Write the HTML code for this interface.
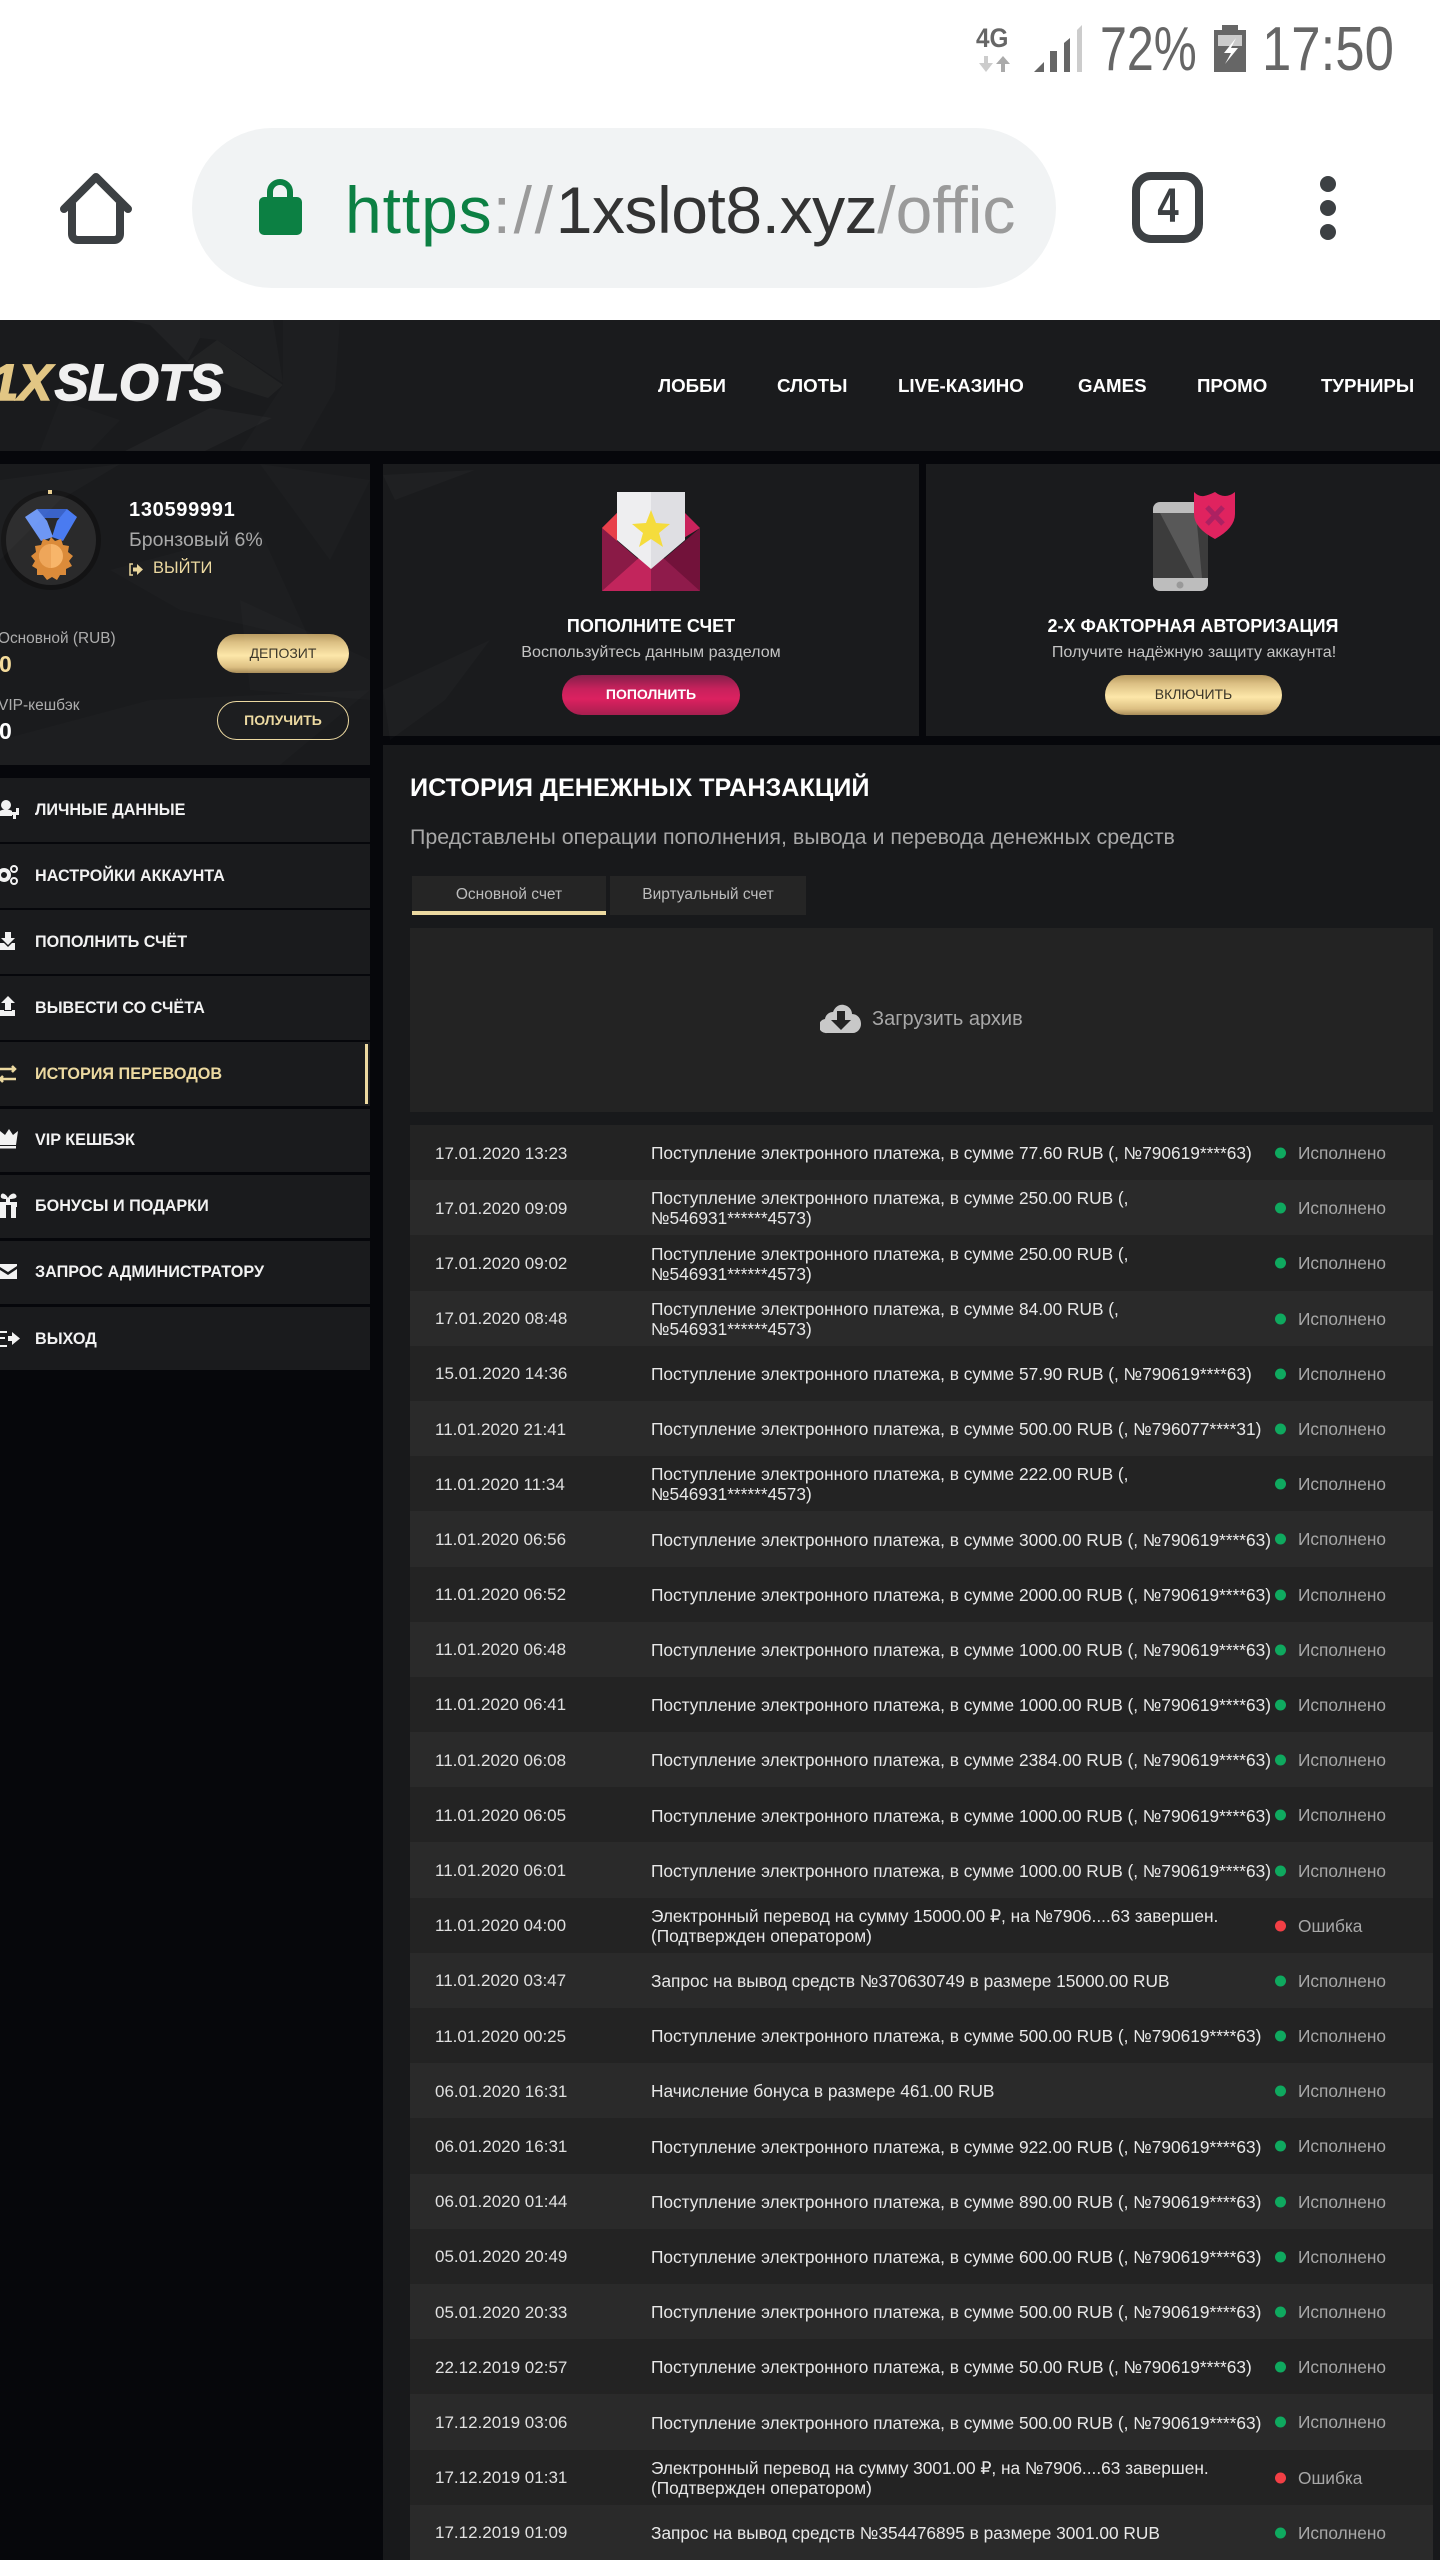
<!DOCTYPE html>
<html lang="ru"><head><meta charset="utf-8"><title>1xSlots</title>
<style>
*{box-sizing:border-box;margin:0;padding:0}
html,body{width:1440px;height:2560px;overflow:hidden;background:#06070b}
body{position:relative;font-family:"Liberation Sans","Noto Sans CJK SC",sans-serif;color:#fff}
.a{position:absolute;white-space:nowrap}
.p{position:absolute;background:#1a1b1d}
.sx{transform-origin:0 50%}
.c{position:absolute;white-space:nowrap;text-align:center;transform:translateX(-50%)}
.nav{position:absolute;top:374.800px;font-size:18.700px;line-height:22px;font-weight:700;white-space:nowrap;transform-origin:0 50%}
.m{position:absolute;left:0;width:370px;height:63.5px;background:#1a1b1d}
.m span{position:absolute;left:35px;top:21.800px;font-size:16.200px;line-height:20px;font-weight:700;color:#f2f2f2;white-space:nowrap}
.btn{position:absolute;border-radius:22px;text-align:center;white-space:nowrap}
.gold{background:linear-gradient(180deg,#b89a60 0,#dcc084 22%,#fde7a9 55%,#dcbf82 85%,#a88c58 100%);color:#3a3528}
#t{position:absolute;left:410px;top:1125px;width:1023px}
.r{position:relative;height:55.2px;background:#232323}
.r:nth-child(even){background:#2a2a2a}
.r b,.r i,.r u,.r s{position:absolute;top:50%;transform:translateY(-50%);font-weight:400;font-style:normal;text-decoration:none;white-space:nowrap}
.r b{left:25px;font-size:17px;line-height:20px;color:#e0e0e0;margin-top:1px}
.r i{left:241px;font-size:17.300px;line-height:20px;color:#e8e8e8;margin-top:.7px}
.r u{left:865px;width:11px;height:11px;border-radius:50%;background:#0fa95f;margin-top:.5px}
.r s{left:888px;font-size:17.300px;line-height:20px;color:#a8a8a8;margin-top:.5px}
.r.e u{background:#f23f45}
</style></head><body>
<div class="a" style="left:0;top:0;width:1440px;height:320px;background:#fff"></div>

<!-- status bar -->
<div class="a" style="left:976px;top:23px;font-size:27px;line-height:30px;font-weight:700;color:#666;transform:scaleX(.9);transform-origin:0 50%">4G</div>
<svg class="a" style="left:975px;top:20px" width="115" height="56" viewBox="975 20 115 56">
<path d="M988 56v7h5l-7 9-7-9h5v-7z" fill="#ccc"/><path d="M1001 72v-8h-5l7-8 7 8h-5v8z" fill="#aaa"/>
<path d="M1034 72l10-10v10z" fill="#666"/><rect x="1050" y="51" width="7" height="21" fill="#666"/><path d="M1064 43l6-5v34h-6z" fill="#666"/><path d="M1077 30l5-5v47h-5z" fill="#ccc"/>
</svg>
<div class="a sx" style="left:1100px;top:14px;font-size:62px;line-height:72px;color:#666;transform:scaleX(.78)">72%</div>
<svg class="a" style="left:1210px;top:22px" width="40" height="54" viewBox="1210 22 40 54">
<path d="M1222 25h16v5h8v42h-32V30h8z" fill="#666"/><rect x="1218" y="35" width="24" height="11" fill="#ccc"/>
<path d="M1236 38l-12 15h7l-6 11 13-16h-7z" fill="#fff"/></svg>
<div class="a sx" style="left:1262px;top:14px;font-size:62px;line-height:72px;color:#666;transform:scaleX(.85)">17:50</div>

<!-- browser bar -->
<svg class="a" style="left:50px;top:165px" width="90" height="85" viewBox="50 165 90 85">
<path d="M64 209L96 177L128 209" fill="none" stroke="#3c4043" stroke-width="8" stroke-linecap="round" stroke-linejoin="round"/>
<path d="M72 203V234a6 6 0 0 0 6 6H114a6 6 0 0 0 6-6V203" fill="none" stroke="#3c4043" stroke-width="8"/></svg>
<div class="a" style="left:192px;top:128px;width:864px;height:160px;border-radius:80px;background:#f1f3f4"></div>
<svg class="a" style="left:255px;top:175px" width="50" height="64" viewBox="255 175 50 64">
<path d="M270 199v-7a10 10 0 0 1 20 0v7" fill="none" stroke="#0c8043" stroke-width="6"/>
<rect x="259" y="197" width="43" height="38" rx="5" fill="#0c8043"/></svg>
<div class="a" style="left:345px;top:170px;width:670px;height:80px;overflow:hidden;font-size:66px;line-height:80px;color:#9a9a9a"><span style="color:#0c8043;letter-spacing:.9px">https</span><span style="letter-spacing:2.700px">://</span><span style="color:#333;letter-spacing:-.45px">1xslot8.xyz</span>/offic</div>
<div class="a" style="left:1132px;top:172px;width:71px;height:71px;border:8px solid #3c4043;border-radius:19px"></div>
<div class="c" style="left:1168px;top:179px;font-size:48px;line-height:56px;font-weight:700;color:#3c4043;transform:translateX(-50%) scaleX(.8)">4</div>
<svg class="a" style="left:1315px;top:170px" width="26" height="76" viewBox="1315 170 26 76"><g fill="#3c4043"><circle cx="1328" cy="184" r="8"/><circle cx="1328" cy="208" r="8"/><circle cx="1328" cy="232" r="8"/></g></svg>

<!-- header -->
<div class="p" style="left:0;top:320px;width:1440px;height:131px"></div>
<div class="a" style="left:-10px;top:353px;font-size:51px;line-height:60px;font-weight:700;font-style:italic;letter-spacing:-.4px"><span style="color:#e2c684;-webkit-text-stroke:1.500px #e2c684">1X</span><span style="color:#f0f0f0;-webkit-text-stroke:1.500px #f0f0f0;margin-left:3px">SLOTS</span></div>
<div class="nav" style="left:658px">ЛОББИ</div>
<div class="nav" style="left:777px">СЛОТЫ</div>
<div class="nav" style="left:898px">LIVE-КАЗИНО</div>
<div class="nav" style="left:1078px">GAMES</div>
<div class="nav" style="left:1197px">ПРОМО</div>
<div class="nav" style="left:1321px">ТУРНИРЫ</div>

<!-- profile panel -->
<div class="p" style="left:0;top:464px;width:370px;height:301px"></div>
<svg class="a" style="left:0;top:485px" width="105" height="110" viewBox="0 485 105 110">
<circle cx="51" cy="540" r="47.500" fill="#2a2a2b" stroke="#131314" stroke-width="5"/><rect x="48" y="490" width="4" height="4" fill="#e9cf90"/>
<path d="M37 509h30l-2 9H39z" fill="#3a63c9"/><path d="M25 517l12-8 10 12 6 16-12 4z" fill="#6e97f4"/><path d="M77 517l-10-8-10 12-5 16 11 4z" fill="#4a7bf0"/>
<path d="M51 537l4 4 6-2 2 6 6 1-1 6 5 4-4 5 3 5-6 3v6l-6 0-3 5-5-3-5 3-4-5-6 0 0-6-5-3 3-5-4-5 5-4-1-6 6-1 2-6 6 2z" fill="#db8b3a"/>
<circle cx="51" cy="556" r="12" fill="#f7b56a"/><path d="M51 544v24a12 12 0 0 1 0-24z" fill="#eea65a"/></svg>
<div class="a" style="left:129px;top:498px;font-size:20px;line-height:24px;font-weight:700;letter-spacing:.7px">130599991</div>
<div class="a" style="left:129px;top:528px;font-size:19.500px;line-height:24px;color:#a9a9a9">Бронзовый 6%</div>
<svg class="a" style="left:128px;top:563px" width="16" height="13" viewBox="0 0 16 13"><path d="M5 1H2v11h3" fill="none" stroke="#e9d59b" stroke-width="1.5"/><path d="M5 4.5h4V1l6 5.500-6 5.500V8.500H5z" fill="#e9d59b"/></svg>
<div class="a" style="left:153px;top:558px;font-size:16.500px;line-height:20px;color:#ecd9a0">ВЫЙТИ</div>
<div class="a" style="left:-2px;top:629px;font-size:15.400px;line-height:20px;color:#adadad">Основной (RUB)</div>
<div class="a" style="left:-1px;top:651px;font-size:23px;line-height:26px;font-weight:700;color:#f5dc9c">0</div>
<div class="a" style="left:-2px;top:696px;font-size:15.500px;line-height:20px;color:#adadad">VIP-кешбэк</div>
<div class="a" style="left:-1px;top:718px;font-size:23px;line-height:26px;font-weight:700">0</div>
<div class="btn gold" style="left:217px;top:634px;width:132px;height:39px;font-size:14px;line-height:39px">ДЕПОЗИТ</div>
<div class="btn" style="left:217px;top:701px;width:132px;height:39px;border:1.500px solid #ecd9a0;color:#ecd9a0;font-size:14px;line-height:36px;font-weight:700">ПОЛУЧИТЬ</div>

<!-- menu -->
<div class="m" style="top:778px"><span>ЛИЧНЫЕ ДАННЫЕ</span></div>
<div class="m" style="top:844.100px"><span>НАСТРОЙКИ АККАУНТА</span></div>
<div class="m" style="top:910.200px"><span>ПОПОЛНИТЬ СЧЁТ</span></div>
<div class="m" style="top:976.300px"><span>ВЫВЕСТИ СО СЧЁТА</span></div>
<div class="m" style="top:1042.400px"><span style="color:#ecd9a0">ИСТОРИЯ ПЕРЕВОДОВ</span></div>
<div class="m" style="top:1108.500px"><span>VIP КЕШБЭК</span></div>
<div class="m" style="top:1174.600px"><span>БОНУСЫ И ПОДАРКИ</span></div>
<div class="m" style="top:1240.700px"><span>ЗАПРОС АДМИНИСТРАТОРУ</span></div>
<div class="m" style="top:1306.800px"><span>ВЫХОД</span></div>
<div class="a" style="left:365px;top:1044px;width:3px;height:60px;background:#ecd9a0"></div>
<svg class="a" style="left:0;top:780px" width="30" height="590" viewBox="0 780 30 590"><g fill="#f2f2f2">
<circle cx="6" cy="805" r="5"/><path d="M0 816v-5c2-2 10-2 12 0v5z"/><path d="M13 811h3v-4h3v4h0v3h-3v4h-3v-4H9v-3z" transform="translate(0 1)"/>
<circle cx="4" cy="875" r="5" fill="none" stroke="#f2f2f2" stroke-width="4"/><circle cx="14" cy="869" r="3" fill="none" stroke="#f2f2f2" stroke-width="2"/><circle cx="14" cy="881" r="3" fill="none" stroke="#f2f2f2" stroke-width="2"/>
<path d="M5 932h6v6h4l-7 7-7-7h4z"/><path d="M0 943h4l4 4 4-4h3v7H0z"/>
<path d="M8 996l7 7h-4v7H5v-7H1z"/><path d="M0 1010h4v1h8v-1h3v6H0z"/>
<path d="M0 1131l5 4 4-6 4 6 5-4-2 14H0z"/><rect x="0" y="1146" width="16" height="2.500"/>
<path d="M0 1202h6v-3c-4 0-6-1-5-4s5-1 7 3c2-4 6-6 8-3s-2 4-6 4v3h7v5h-1v11h-5v-13H6v13H0v-11z"/>
<path d="M0 1264h17v2l-9 6-8-5zM0 1270l8 5 9-6v10H0z"/>
<path d="M8 1338v-2h4v-4l8 6.500-8 6.500v-4H8z"/><path d="M0 1331h7v2H0zM0 1345h7v2H0zM0 1337h5v2H0z"/>
</g><path d="M0 1069h15m-3-3l3 3-3 3M16 1079H0m3-3l-3 3 3 3" fill="none" stroke="#ecd9a0" stroke-width="2.500"/></svg>

<!-- promo cards -->
<div class="p" style="left:383px;top:464px;width:536px;height:272px"></div>
<div class="p" style="left:926px;top:464px;width:514px;height:272px"></div>
<svg class="a" style="left:600px;top:490px" width="102" height="103" viewBox="600 490 102 103">
<path d="M602 528l15-15h68l15 15-49 30z" fill="#c9235c"/><path d="M602 528l15-15v40z" fill="#e8404a"/>
<path d="M602 528l49 42-49 21z" fill="#8a1a46"/><path d="M700 528l-49 42 49 21z" fill="#72123a"/>
<path d="M602 591l49-44v44z" fill="#c2255c"/><path d="M700 591l-49-44v44z" fill="#8f1b4b"/>
<path d="M617 492h34v77l-34-29z" fill="#eeeef0"/><path d="M651 492h34v48l-34 29z" fill="#dfdfe3"/>
<path d="M651 510l5 13 14 1-11 9 4 14-12-8-12 8 4-14-11-9 14-1z" fill="#f5dc3c"/></svg>
<div class="c" style="left:651px;top:615px;font-size:18px;line-height:22px;font-weight:700">ПОПОЛНИТЕ СЧЕТ</div>
<div class="c" style="left:651px;top:642px;font-size:16.100px;line-height:20px;color:#c4c4c4">Воспользуйтесь данным разделом</div>
<div class="btn" style="left:562px;top:675px;width:178px;height:40px;background:linear-gradient(180deg,#83204a 0,#c8215c 35%,#dc2160 60%,#a71f50 100%);font-size:14px;line-height:39px;font-weight:700">ПОПОЛНИТЬ</div>
<svg class="a" style="left:1150px;top:490px" width="90" height="103" viewBox="1150 490 90 103">
<rect x="1153" y="502" width="55" height="89" rx="7" fill="#bdbdbd"/><rect x="1153" y="513" width="55" height="65" fill="#3c3c3c"/>
<path d="M1160 513h36l6 65h-8z" fill="#585858"/><circle cx="1180" cy="585" r="3.500" fill="#999"/>
<path d="M1194 492q5 5 10 4t11-4q5 4 10 4t10-4v22q0 14-20 25-21-11-21-25z" fill="#e0235f"/>
<path d="M1207 507l16 17m0-17l-16 17" stroke="#ac2162" stroke-width="5"/></svg>
<div class="c" style="left:1193px;top:615px;font-size:18px;line-height:22px;font-weight:700">2-Х ФАКТОРНАЯ АВТОРИЗАЦИЯ</div>
<div class="c" style="left:1194px;top:642px;font-size:16.100px;line-height:20px;color:#c4c4c4">Получите надёжную защиту аккаунта!</div>
<div class="btn gold" style="left:1105px;top:675px;width:177px;height:40px;font-size:14px;line-height:39px">ВКЛЮЧИТЬ</div>

<!-- main -->
<div class="p" style="left:383px;top:745px;width:1057px;height:1815px;background:#18191b"></div>
<div class="a" style="left:410px;top:772px;font-size:25.200px;line-height:32px;font-weight:700">ИСТОРИЯ ДЕНЕЖНЫХ ТРАНЗАКЦИЙ</div>
<div class="a" style="left:410px;top:824.300px;font-size:21.400px;line-height:26px;color:#a8a8a8">Представлены операции пополнения, вывода и перевода денежных средств</div>
<div class="a" style="left:412px;top:876px;width:194px;height:39px;background:#252525;border-bottom:4px solid #ecd9a0;text-align:center;font-size:15.500px;line-height:37px;color:#bcbcbc">Основной счет</div>
<div class="a" style="left:610px;top:876px;width:196px;height:39px;background:#252525;text-align:center;font-size:15.500px;line-height:37px;color:#bcbcbc">Виртуальный счет</div>
<div class="a" style="left:410px;top:928px;width:1023px;height:184px;background:#232323"></div>
<svg class="a" style="left:820px;top:1002px" width="42" height="33" viewBox="0 0 42 33"><path d="M7 31a7 7 0 0 1-2-14 8 8 0 0 1 8-7C15 5 19 2 24 3c5 1 8 5 8 9 5 0 9 4 9 10 0 5-4 9-8 9z" fill="#c8c8c8"/><path d="M17 9h8v9h6L21 28 11 18h6z" fill="#232323"/></svg>
<div class="a" style="left:872px;top:1008px;font-size:20px;line-height:22px;color:#a8a8a8">Загрузить архив</div>

<div id="t">
<div class="r"><b>17.01.2020 13:23</b><i>Поступление электронного платежа, в сумме 77.60 RUB (, №790619****63)</i><u></u><s>Исполнено</s></div>
<div class="r"><b>17.01.2020 09:09</b><i>Поступление электронного платежа, в сумме 250.00 RUB (,<br>№546931******4573)</i><u></u><s>Исполнено</s></div>
<div class="r"><b>17.01.2020 09:02</b><i>Поступление электронного платежа, в сумме 250.00 RUB (,<br>№546931******4573)</i><u></u><s>Исполнено</s></div>
<div class="r"><b>17.01.2020 08:48</b><i>Поступление электронного платежа, в сумме 84.00 RUB (,<br>№546931******4573)</i><u></u><s>Исполнено</s></div>
<div class="r"><b>15.01.2020 14:36</b><i>Поступление электронного платежа, в сумме 57.90 RUB (, №790619****63)</i><u></u><s>Исполнено</s></div>
<div class="r"><b>11.01.2020 21:41</b><i>Поступление электронного платежа, в сумме 500.00 RUB (, №796077****31)</i><u></u><s>Исполнено</s></div>
<div class="r"><b>11.01.2020 11:34</b><i>Поступление электронного платежа, в сумме 222.00 RUB (,<br>№546931******4573)</i><u></u><s>Исполнено</s></div>
<div class="r"><b>11.01.2020 06:56</b><i>Поступление электронного платежа, в сумме 3000.00 RUB (, №790619****63)</i><u></u><s>Исполнено</s></div>
<div class="r"><b>11.01.2020 06:52</b><i>Поступление электронного платежа, в сумме 2000.00 RUB (, №790619****63)</i><u></u><s>Исполнено</s></div>
<div class="r"><b>11.01.2020 06:48</b><i>Поступление электронного платежа, в сумме 1000.00 RUB (, №790619****63)</i><u></u><s>Исполнено</s></div>
<div class="r"><b>11.01.2020 06:41</b><i>Поступление электронного платежа, в сумме 1000.00 RUB (, №790619****63)</i><u></u><s>Исполнено</s></div>
<div class="r"><b>11.01.2020 06:08</b><i>Поступление электронного платежа, в сумме 2384.00 RUB (, №790619****63)</i><u></u><s>Исполнено</s></div>
<div class="r"><b>11.01.2020 06:05</b><i>Поступление электронного платежа, в сумме 1000.00 RUB (, №790619****63)</i><u></u><s>Исполнено</s></div>
<div class="r"><b>11.01.2020 06:01</b><i>Поступление электронного платежа, в сумме 1000.00 RUB (, №790619****63)</i><u></u><s>Исполнено</s></div>
<div class="r e"><b>11.01.2020 04:00</b><i>Электронный перевод на сумму 15000.00 ₽, на №7906....63 завершен.<br>(Подтвержден оператором)</i><u></u><s>Ошибка</s></div>
<div class="r"><b>11.01.2020 03:47</b><i>Запрос на вывод средств №370630749 в размере 15000.00 RUB</i><u></u><s>Исполнено</s></div>
<div class="r"><b>11.01.2020 00:25</b><i>Поступление электронного платежа, в сумме 500.00 RUB (, №790619****63)</i><u></u><s>Исполнено</s></div>
<div class="r"><b>06.01.2020 16:31</b><i>Начисление бонуса в размере 461.00 RUB</i><u></u><s>Исполнено</s></div>
<div class="r"><b>06.01.2020 16:31</b><i>Поступление электронного платежа, в сумме 922.00 RUB (, №790619****63)</i><u></u><s>Исполнено</s></div>
<div class="r"><b>06.01.2020 01:44</b><i>Поступление электронного платежа, в сумме 890.00 RUB (, №790619****63)</i><u></u><s>Исполнено</s></div>
<div class="r"><b>05.01.2020 20:49</b><i>Поступление электронного платежа, в сумме 600.00 RUB (, №790619****63)</i><u></u><s>Исполнено</s></div>
<div class="r"><b>05.01.2020 20:33</b><i>Поступление электронного платежа, в сумме 500.00 RUB (, №790619****63)</i><u></u><s>Исполнено</s></div>
<div class="r"><b>22.12.2019 02:57</b><i>Поступление электронного платежа, в сумме 50.00 RUB (, №790619****63)</i><u></u><s>Исполнено</s></div>
<div class="r"><b>17.12.2019 03:06</b><i>Поступление электронного платежа, в сумме 500.00 RUB (, №790619****63)</i><u></u><s>Исполнено</s></div>
<div class="r e"><b>17.12.2019 01:31</b><i>Электронный перевод на сумму 3001.00 ₽, на №7906....63 завершен.<br>(Подтвержден оператором)</i><u></u><s>Ошибка</s></div>
<div class="r"><b>17.12.2019 01:09</b><i>Запрос на вывод средств №354476895 в размере 3001.00 RUB</i><u></u><s>Исполнено</s></div>
</div>

<!-- faint polygon texture -->
<svg class="a" style="left:0;top:320px" width="520" height="520" viewBox="0 320 520 520"><g fill="#fff">
<path d="M127 320H200V338L187 362L150 325z" fill-opacity=".03"/>
<path d="M200 320H273L283 383L217 340L200 338z" fill-opacity=".02"/>
<path d="M187 362L217 340L283 385L268 398L232 387z" fill-opacity=".035"/>
<path d="M60 400L120 420L90 451H40z" fill-opacity=".015"/>
<path d="M125 451L210 408L272 418L205 451z" fill-opacity=".03"/>
<path d="M283 320H340L335 390L300 451H240L283 385z" fill-opacity=".015"/>
<path d="M0 480L120 464L60 500L0 560z" fill-opacity=".02"/>
<path d="M110 570L260 530L310 640L180 610z" fill-opacity=".015"/>
<path d="M370 480L260 464L330 560z" fill-opacity=".015"/>
<path d="M0 740L150 700L370 690L280 765H0z" fill-opacity=".015"/>
<path d="M240 600L370 660V700L250 690z" fill-opacity=".015"/>
<path d="M383 475L475 470L395 500z" fill-opacity=".025"/>
<path d="M383 690L490 640L445 700L390 740z" fill-opacity=".02"/>
</g></svg>
</body></html>
